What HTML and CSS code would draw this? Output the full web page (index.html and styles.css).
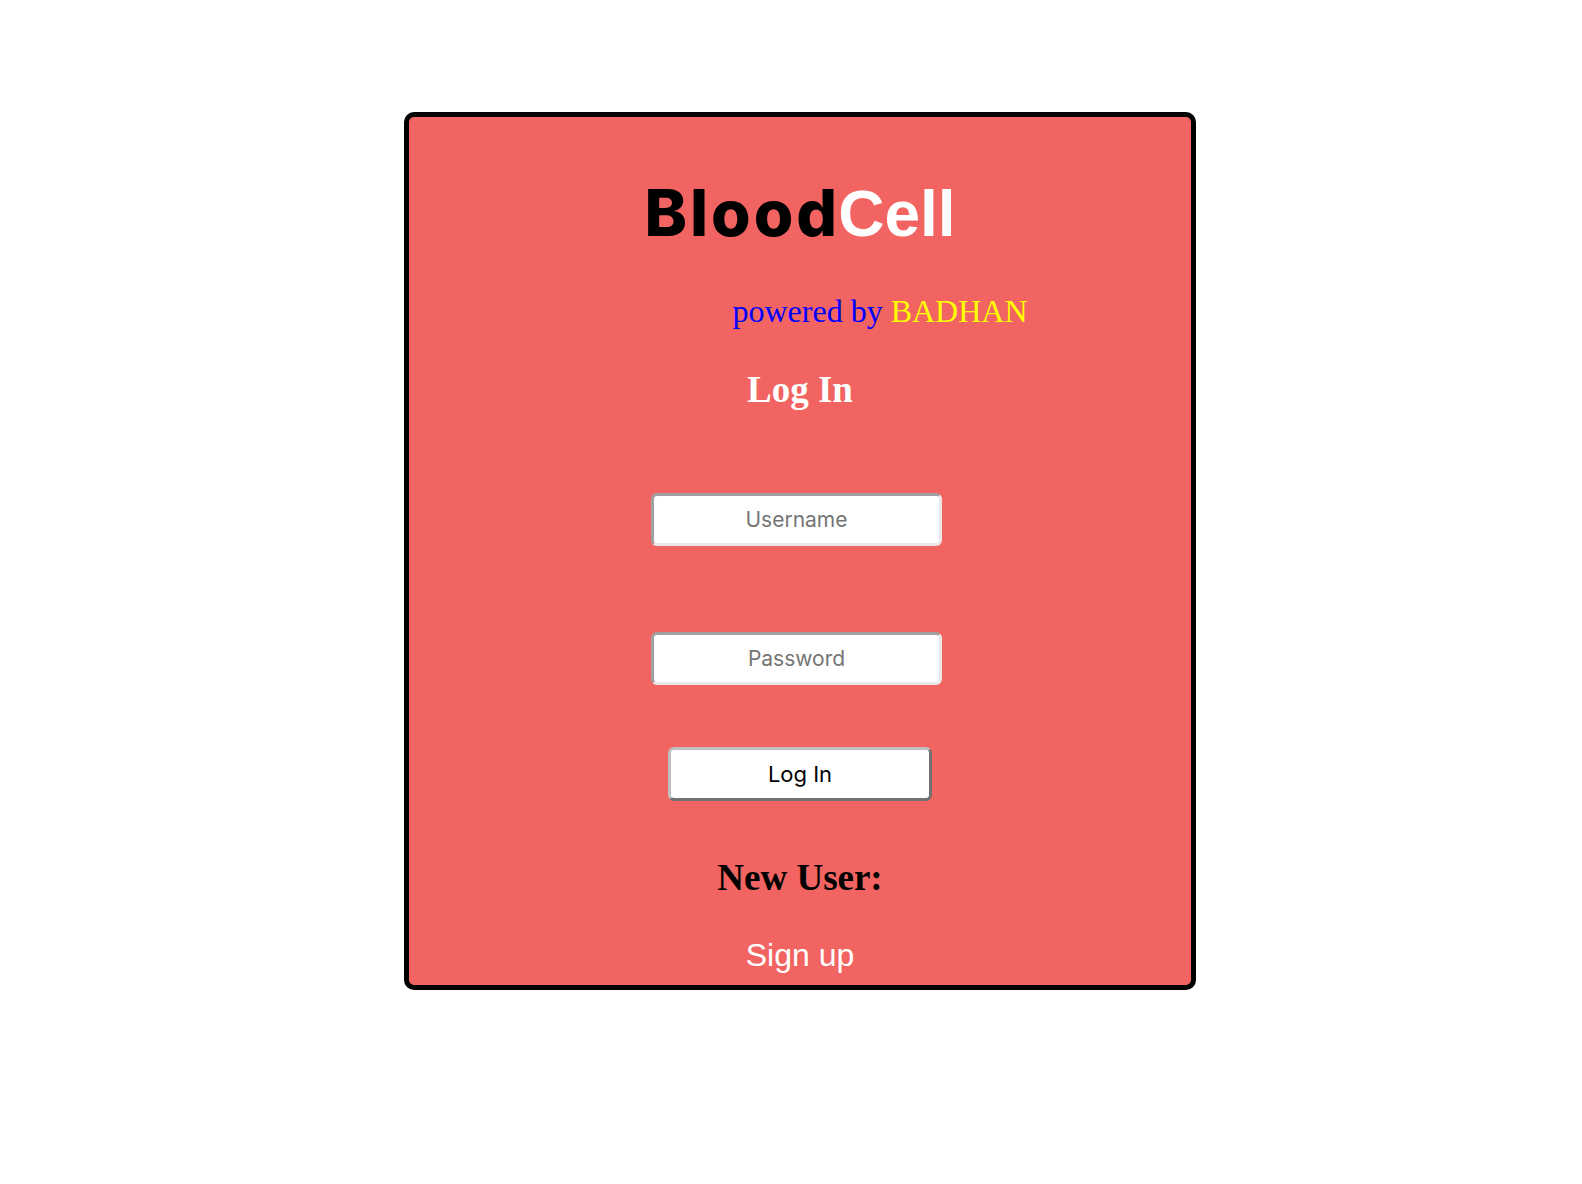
FILE: index.html
```html
<!DOCTYPE html>
<html>
<head>
<meta charset="utf-8">
<title>BloodCell - Log In</title>
<link rel="stylesheet" href="styles.css">
</head>
<body>
<div class="card">
  <h1 class="brand"><span class="brand-blood">Blood</span><span class="brand-cell">Cell</span></h1>
  <p class="powered"><span class="powered-by">powered by</span> <span class="powered-name">BADHAN</span></p>
  <h2 class="heading">Log In</h2>
  <form class="form">
    <input class="field field-user" type="text" placeholder="Username">
    <input class="field field-pass" type="password" placeholder="Password">
    <button class="btn" type="button">Log In</button>
  </form>
  <h2 class="heading heading-new">New User:</h2>
  <a class="signup" href="#">Sign up</a>
</div>
</body>
</html>
```
FILE: styles.css
```css
html, body {
  margin: 0;
  padding: 0;
  background: #ffffff;
}
.card {
  box-sizing: border-box;
  width: 792px;
  margin: 112px 0 0 404px;
  border: 5px solid #000000;
  border-radius: 10px;
  background: #f26461;
  padding: 64px 0 12px 0;
  text-align: center;
  display: flex;
  flex-direction: column;
  align-items: center;
}
.brand {
  margin: 0;
  font-family: "Liberation Sans", Arial, sans-serif;
  font-weight: bold;
  font-size: 64px;
  line-height: 64px;
  height: 64px;
}
.brand-blood {
  color: #000000;
  font-family: Inter, "Liberation Sans", sans-serif;
  font-weight: 800;
  font-size: 64px;
  letter-spacing: 3px;
  margin-right: -2px;
}
.brand-cell {
  color: #ffffff;
}
.powered {
  margin: 48px 0 0 160px;
  font-family: "Liberation Serif", "Times New Roman", serif;
  font-size: 32px;
  line-height: 36px;
}
.powered-by {
  color: #0000ff;
}
.powered-name {
  color: #ffff00;
}
.heading {
  margin: 40px 0 0 0;
  font-family: "Liberation Serif", "Times New Roman", serif;
  font-weight: bold;
  font-size: 37px;
  line-height: 42px;
  color: #ffffff;
}
.form {
  margin: 82px 0 0 0;
  display: flex;
  flex-direction: column;
  align-items: center;
}
.field {
  box-sizing: border-box;
  width: 291px;
  height: 53px;
  margin: 0 7px 0 0;
  padding: 0 8px;
  background: #ffffff;
  border-style: solid;
  border-width: 3px;
  border-color: #a0a0a0 #e8e8e8 #e8e8e8 #a0a0a0;
  border-radius: 6px;
  font-family: Inter, "Liberation Sans", sans-serif;
  font-size: 21px;
  color: #333333;
  text-align: center;
  outline: none;
}
.field::placeholder {
  color: #757575;
}
.field-pass {
  margin-top: 86px;
}
.btn {
  box-sizing: border-box;
  width: 264px;
  height: 54px;
  margin-top: 62px;
  background: #ffffff;
  border-style: solid;
  border-width: 3px;
  border-color: #c0c0c0 #717171 #717171 #c0c0c0;
  border-radius: 6px;
  font-family: Inter, "Liberation Sans", sans-serif;
  font-size: 22px;
  color: #000000;
  padding: 0;
}
.heading-new {
  margin-top: 56px;
  color: #000000;
}
.signup {
  display: block;
  margin-top: 38px;
  font-family: "Liberation Sans", Arial, sans-serif;
  font-size: 32px;
  line-height: 36px;
  color: #ffffff;
  text-decoration: none;
}
```
